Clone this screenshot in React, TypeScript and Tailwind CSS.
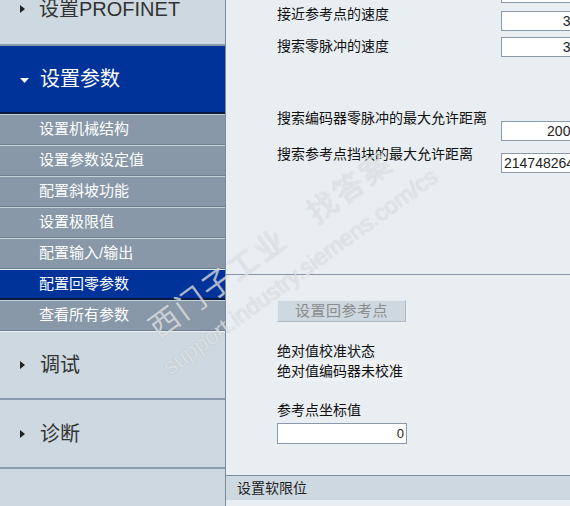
const subItems = [
  { label: "设置机械结构" },
  { label: "设置参数设定值" },
  { label: "配置斜坡功能" },
  { label: "设置极限值" },
  { label: "配置输入/输出" },
  { label: "配置回零参数", active: true },
  { label: "查看所有参数" },
];

function Arrow() {
  return (
    <svg width="6" height="10" viewBox="0 0 6 10" className="shrink-0">
      <polygon points="0,1 5,5 0,9" fill="#222" />
    </svg>
  );
}

function Field({ value, className }: { value: string; className: string }) {
  return (
    <div
      className={
        "h-[20px] bg-white border border-[#8a9aaa] flex items-center overflow-hidden whitespace-nowrap text-[14px] text-[#222] font-['Liberation_Sans',sans-serif] " +
        className
      }
    >
      {value}
    </div>
  );
}

export default function App() {
  return (
    <div className="relative w-[570px] h-[506px] overflow-hidden flex bg-[#e9eef2] font-['Liberation_Sans','Noto_Sans_CJK_SC',sans-serif]">
      {/* Sidebar */}
      <aside className="w-[226px] shrink-0 flex flex-col bg-[#cdd8e0] border-r border-[#7b8b9b]">
        <div className="-mt-[27px] h-[73px] flex items-center gap-[13px] pl-[20px] border-b-2 border-[#8a9aaa] text-[20px] text-[#333]">
          <Arrow />
          <span>设置PROFINET</span>
        </div>
        <div className="h-[68px] bg-[#003399] flex items-center gap-[11px] pl-[20px] border-b-2 border-[#0a1a40] text-[20px] text-white">
          <svg width="9" height="6" viewBox="0 0 9 6" className="mt-[3px]">
            <polygon points="0,0 9,0 4.5,5" fill="#fff" />
          </svg>
          <span>设置参数</span>
        </div>
        {subItems.map((s) => (
          <div
            key={s.label}
            className={
              "h-[31px] flex items-center pl-[39px] text-[15px] text-white border-t " +
              (s.active
                ? "bg-[#003399] border-[#e6eef4] border-b-2 border-b-[#0a1a40]"
                : "bg-[#8898a8] border-[#c6d2da] border-b border-b-[#6e7e8e]")
            }
          >
            {s.label}
          </div>
        ))}
        <div className="h-[69px] flex items-center gap-[14px] pl-[20px] border-t border-[#eef3f6] border-b-2 border-b-[#8a9aaa] text-[20px] text-[#333]">
          <Arrow />
          <span>调试</span>
        </div>
        <div className="h-[69px] flex items-center gap-[14px] pl-[20px] border-b-2 border-[#8a9aaa] text-[20px] text-[#333]">
          <Arrow />
          <span>诊断</span>
        </div>
      </aside>

      {/* Main pane */}
      <main className="flex-1 flex flex-col overflow-hidden text-[14px] text-[#111]">
        <section className="h-[275px] shrink-0 flex pl-[51px] border-b border-[#8796a6]">
          <div className="w-[224px] shrink-0 flex flex-col leading-[20px]">
            <div className="mt-[4px]">接近参考点的速度</div>
            <div className="mt-[12px]">搜索零脉冲的速度</div>
            <div className="mt-[52px]">搜索编码器零脉冲的最大允许距离</div>
            <div className="mt-[16px]">搜索参考点挡块的最大允许距离</div>
          </div>
          <div className="w-[88px] shrink-0 flex flex-col">
            <Field value="3000" className="-mt-[17px] justify-end pr-[2px]" />
            <Field value="300" className="mt-[8px] justify-end pr-[2px]" />
            <Field value="300" className="mt-[6px] justify-end pr-[2px]" />
            <Field value="20000" className="mt-[64px] justify-end pr-[2px]" />
            <Field value="2147482647" className="mt-[12px] justify-start pl-[2px]" />
          </div>
        </section>

        <section className="h-[200px] shrink-0 flex flex-col items-start pl-[51px] leading-[20px]">
          <button className="mt-[25px] w-[129px] h-[22px] bg-[#cdd8e0] border border-t-[#e4ebf0] border-l-[#e4ebf0] border-b-[#aebbc6] border-r-[#aebbc6] text-[15px] text-[#8c8c8c] tracking-[0.5px]">
            设置回参考点
          </button>
          <div className="mt-[19px]">绝对值校准状态</div>
          <div className="bg-[#eef2f5] pr-[4px]">绝对值编码器未校准</div>
          <div className="mt-[19px]">参考点坐标值</div>
          <div className="mt-[3px] w-[130px] h-[21px] bg-white border border-[#8a9aaa] flex items-center justify-end pr-[2px] text-[13px] text-[#222]">
            0
          </div>
        </section>

        <div className="h-[25px] shrink-0 bg-[#cdd8e0] border-t border-[#7b8b9b] flex items-center pl-[11px] text-[14px] text-[#222]">
          设置软限位
        </div>
        <div className="flex-1 bg-[#e9eef2]" />
      </main>

      {/* Watermark */}
      <div className="pointer-events-none absolute left-[142px] top-[317px] origin-top-left -rotate-[36deg] whitespace-nowrap text-white/60 [text-shadow:0_0_1px_rgba(110,120,130,0.45)]">
        <div className="h-[36px] text-[30px] leading-[36px] tracking-[2.6px]">西门子工业　找答案</div>
        <div className="mt-[8px] -ml-[12px] text-[23px] leading-[24px]">support.industry.siemens.com/cs</div>
      </div>
    </div>
  );
}
